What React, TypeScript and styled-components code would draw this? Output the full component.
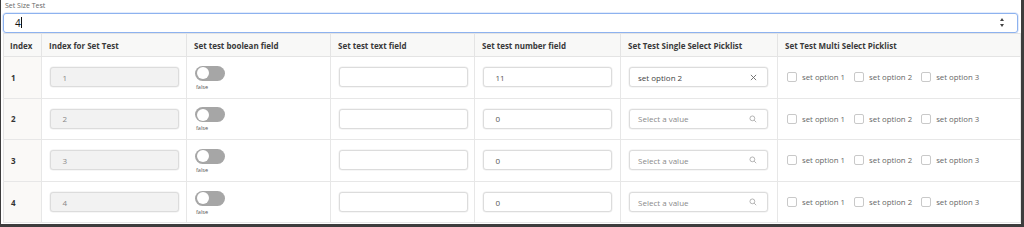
import React from "react";
import styled, { createGlobalStyle } from "styled-components";

const Global = createGlobalStyle`
  html, body { margin: 0; padding: 0; background: #fff; }
  body { font-family: "Open Sans", "Noto Sans", sans-serif; color: #333; }
  * { box-sizing: border-box; }
`;

const Frame = styled.div`
  width: 1024px;
  height: 227px;
  border-left: 1px solid #3d3d3d;
  border-right: 3px solid #3d3d3d;
  border-bottom: 3px solid #3d3d3d;
  padding: 0 1px 0 2px;
  overflow: hidden;
`;

const FieldLabel = styled.div`
  height: 12.5px;
  padding: 2px 0 0 2px;
  font-size: 7px;
  line-height: 8px;
  color: #666;
`;

const SizeInput = styled.div`
  display: flex;
  align-items: center;
  width: calc(100% - 2px);
  height: 20px;
  margin-bottom: 0.5px;
  border: 1px solid #8db2ef;
  border-radius: 3px;
  box-shadow: 0 0 0 0.5px #c7d9f7;
  padding: 0 13px 0 11px;
  font-size: 10px;
  color: #111;
`;

const Caret = styled.span`
  display: inline-block;
  width: 1px;
  height: 11px;
  background: #111;
  margin-left: 0.5px;
`;

const Spinner = styled.span`
  margin-left: auto;
  display: flex;
  flex-direction: column;
  gap: 3px;
  align-items: center;
`;

const Tri = styled.span<{ $down?: boolean }>`
  width: 0;
  height: 0;
  border-left: 2.5px solid transparent;
  border-right: 2.5px solid transparent;
  ${(p) =>
    p.$down
      ? "border-top: 3px solid #444;"
      : "border-bottom: 3px solid #444;"}
`;

const Table = styled.table`
  width: 100%;
  table-layout: fixed;
  border-collapse: collapse;
  border: 1px solid #e4e4e4;
  font-size: 8px;
`;

const HeadCell = styled.th<{ $first?: boolean }>`
  height: 23px;
  padding: 0 0 0 ${(p) => (p.$first ? "6px" : "7px")};
  text-align: left;
  font-weight: 700;
  font-size: 8px;
  color: #3a3a3a;
  background: #f8f8f7;
  border-right: 1px solid #e4e4e4;
  border-bottom: 1px solid #e4e4e4;
  white-space: nowrap;
`;

const Row = styled.tr`
  height: 41.6px;
`;

const Cell = styled.td<{ $index?: boolean }>`
  padding: 0 0 0 ${(p) => (p.$index ? "7px" : "8px")};
  vertical-align: middle;
  border-right: 1px solid #e7e7e7;
  border-bottom: 1px solid #e7e7e7;
  background: ${(p) => (p.$index ? "#faf9f7" : "#fff")};
  font-weight: ${(p) => (p.$index ? 700 : 400)};
  color: #333;
`;

const Box = styled.div<{ $disabled?: boolean; $w?: number; $pl?: number }>`
  display: flex;
  align-items: center;
  width: ${(p) => p.$w ?? 128.5}px;
  height: 20px;
  border: 1px solid #dcdcdc;
  border-radius: 3px;
  background: ${(p) => (p.$disabled ? "#f2f2f2" : "#fff")};
  padding: 0 10px 0 ${(p) => p.$pl ?? 11.5}px;
  font-size: 8px;
  color: ${(p) => (p.$disabled ? "#888" : "#555")};
  box-shadow: 0 0 0 0.5px #eee;
`;

const SelectText = styled.span<{ $placeholder?: boolean }>`
  color: ${(p) => (p.$placeholder ? "#8a8a8a" : "#444")};
  font-size: 8px;
`;

const Icon = styled.span`
  margin-left: auto;
  display: flex;
  align-items: center;
`;

const ToggleWrap = styled.div`
  display: flex;
  flex-direction: column;
  align-items: flex-start;
  padding-top: 2px;
`;

const Track = styled.div`
  width: 30px;
  height: 15px;
  border-radius: 8px;
  background: #a6a6a6;
  padding: 1.5px;
  display: flex;
`;

const Knob = styled.div`
  width: 12px;
  height: 12px;
  border-radius: 50%;
  background: #fff;
`;

const ToggleLabel = styled.span`
  font-size: 5.5px;
  color: #555;
  margin-top: 2px;
  margin-left: 1px;
`;

const Options = styled.div`
  display: flex;
  align-items: center;
  gap: 9px;
  padding-left: 1px;
`;

const Option = styled.label`
  display: flex;
  align-items: center;
  gap: 5px;
  font-size: 7.8px;
  color: #666;
`;

const Check = styled.span`
  width: 10px;
  height: 10px;
  border: 1px solid #c9c9c9;
  border-radius: 2px;
  background: #fff;
`;

const headers = [
  "Index",
  "Index for Set Test",
  "Set test boolean field",
  "Set test text field",
  "Set test number field",
  "Set Test Single Select Picklist",
  "Set Test Multi Select Picklist",
];
const widths = [38, 145, 144, 144, 146, 157, 243];

const rows = [
  { n: 1, num: "11", sel: "set option 2" },
  { n: 2, num: "0", sel: "" },
  { n: 3, num: "0", sel: "" },
  { n: 4, num: "0", sel: "" },
];

const XIcon = () => (
  <svg width="7" height="7" viewBox="0 0 8 8">
    <path d="M1 1 L7 7 M7 1 L1 7" stroke="#666" strokeWidth="1" />
  </svg>
);

const SearchIcon = () => (
  <svg width="8" height="8" viewBox="0 0 10 10">
    <circle cx="4.2" cy="4.2" r="3" fill="none" stroke="#999" strokeWidth="0.9" />
    <path d="M6.4 6.4 L9 9" stroke="#999" strokeWidth="0.9" />
  </svg>
);

export default function App() {
  return (
    <>
      <Global />
      <Frame>
        <FieldLabel>Set Size Test</FieldLabel>
        <SizeInput>
          <span>4</span>
          <Caret />
          <Spinner>
            <Tri />
            <Tri $down />
          </Spinner>
        </SizeInput>
        <Table>
          <colgroup>
            {widths.map((w, i) => (
              <col key={i} style={{ width: w }} />
            ))}
          </colgroup>
          <thead>
            <tr>
              {headers.map((h, i) => (
                <HeadCell key={h} $first={i === 0}>
                  {h}
                </HeadCell>
              ))}
            </tr>
          </thead>
          <tbody>
            {rows.map((r) => (
              <Row key={r.n}>
                <Cell $index>{r.n}</Cell>
                <Cell>
                  <Box $disabled>{r.n}</Box>
                </Cell>
                <Cell>
                  <ToggleWrap>
                    <Track>
                      <Knob />
                    </Track>
                    <ToggleLabel>false</ToggleLabel>
                  </ToggleWrap>
                </Cell>
                <Cell>
                  <Box />
                </Cell>
                <Cell>
                  <Box>{r.num}</Box>
                </Cell>
                <Cell>
                  <Box $w={139} $pl={8}>
                    {r.sel ? (
                      <SelectText>{r.sel}</SelectText>
                    ) : (
                      <SelectText $placeholder>Select a value</SelectText>
                    )}
                    <Icon>{r.sel ? <XIcon /> : <SearchIcon />}</Icon>
                  </Box>
                </Cell>
                <Cell>
                  <Options>
                    {[1, 2, 3].map((o) => (
                      <Option key={o}>
                        <Check />
                        set option {o}
                      </Option>
                    ))}
                  </Options>
                </Cell>
              </Row>
            ))}
          </tbody>
        </Table>
      </Frame>
    </>
  );
}
